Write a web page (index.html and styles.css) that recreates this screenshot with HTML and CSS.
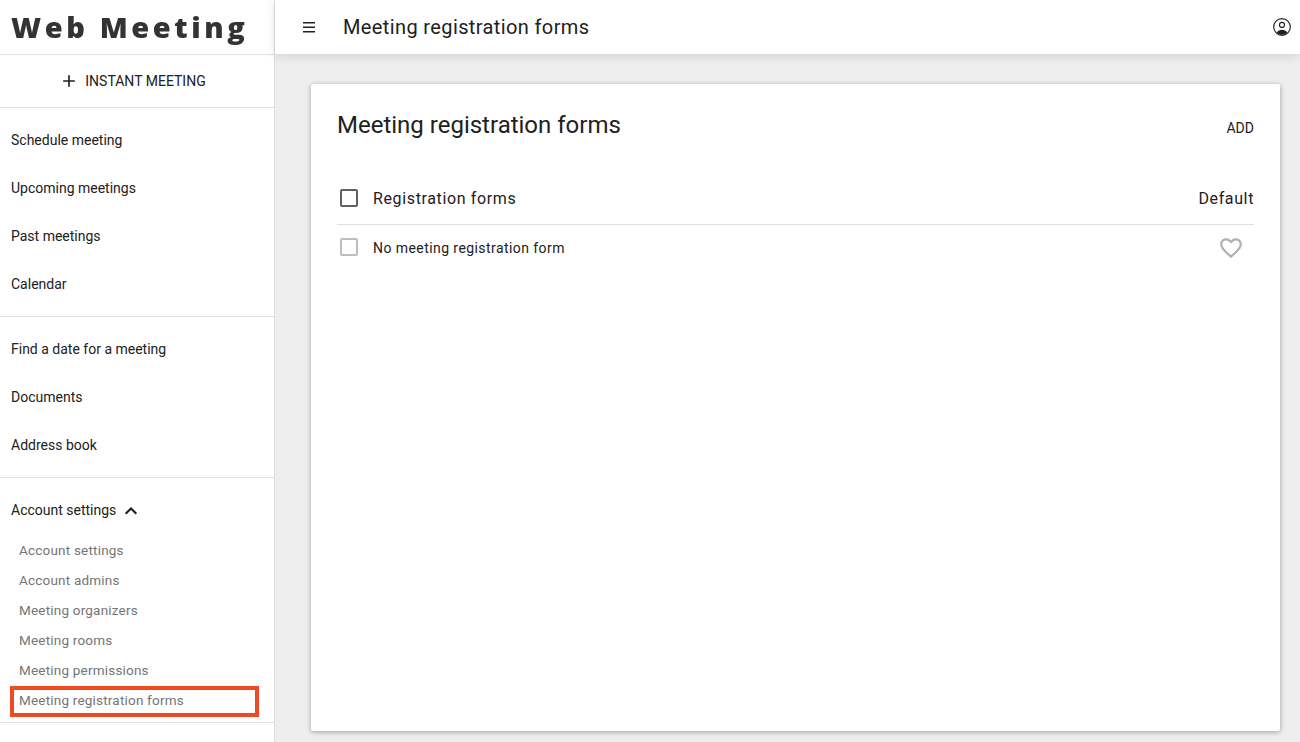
FILE: index.html
```html
<!DOCTYPE html>
<html lang="en">
<head>
<meta charset="utf-8">
<title>Meeting registration forms</title>
<link rel="stylesheet" href="styles.css">
</head>
<body>
<div class="app">
  <aside class="sidebar">
    <div class="logo"><span class="logo-text">Web Meeting</span></div>
    <button class="instant" type="button">
      <svg class="plus" viewBox="0 0 24 24" width="20" height="20"><path d="M19 13h-6v6h-2v-6H5v-2h6V5h2v6h6v2z"/></svg>
      <span>INSTANT MEETING</span>
    </button>
    <nav class="section">
      <a class="item">Schedule meeting</a>
      <a class="item">Upcoming meetings</a>
      <a class="item">Past meetings</a>
      <a class="item">Calendar</a>
    </nav>
    <nav class="section">
      <a class="item">Find a date for a meeting</a>
      <a class="item">Documents</a>
      <a class="item">Address book</a>
    </nav>
    <nav class="section">
      <a class="item">Account settings
        <svg class="chev" viewBox="0 0 24 24" width="22" height="22"><path d="M12 7.6l-6.6 6.6 1.6 1.6 5-5 5 5 1.6-1.6z"/></svg>
      </a>
      <a class="sub">Account settings</a>
      <a class="sub">Account admins</a>
      <a class="sub">Meeting organizers</a>
      <a class="sub">Meeting rooms</a>
      <a class="sub">Meeting permissions</a>
      <a class="sub sub-marked">Meeting registration forms</a>
    </nav>
  </aside>
  <div class="main">
    <header class="topbar">
      <svg class="menu" viewBox="0 0 12 11" width="12" height="11"><path d="M0 0h12v1.5H0zM0 4.4h12v1.5H0zM0 8.9h12v1.5H0z"/></svg>
      <h1 class="page-title">Meeting registration forms</h1>
      <svg class="user" viewBox="0 0 18 18" width="18" height="18"><circle class="user-line" cx="9" cy="9" r="8.3"/><circle class="user-line" cx="9" cy="6.9" r="2.5"/><path d="M3.7 14.4C5 12.6 7 11.8 9 11.8s4 .8 5.3 2.6C13 16 11.1 16.8 9 16.8s-4-.8-5.3-2.4z"/></svg>
    </header>
    <main class="content">
      <section class="card">
        <div class="card-head">
          <h2 class="card-title">Meeting registration forms</h2>
          <span class="add">ADD</span>
        </div>
        <div class="row row-head">
          <span class="check check-dark"></span>
          <span class="col-name">Registration forms</span>
          <span class="col-default">Default</span>
        </div>
        <div class="row row-body">
          <span class="check"></span>
          <span class="row-name">No meeting registration form</span>
          <svg class="heart" viewBox="0 0 24 24" width="26" height="26"><path d="M16.5 3c-1.74 0-3.41.81-4.5 2.09C10.91 3.81 9.24 3 7.5 3 4.42 3 2 5.42 2 8.5c0 3.78 3.4 6.86 8.55 11.54L12 21.35l1.45-1.32C18.6 15.36 22 12.28 22 8.5 22 5.42 19.58 3 16.5 3zm-4.4 15.55l-.1.1-.1-.1C7.14 14.24 4 11.39 4 8.5 4 6.5 5.5 5 7.5 5c1.54 0 3.04.99 3.57 2.36h1.87C13.46 5.99 14.96 5 16.5 5c2 0 3.5 1.5 3.5 3.5 0 2.89-3.14 5.74-7.9 10.05z"/></svg>
        </div>
      </section>
    </main>
  </div>
</div>
</body>
</html>
```
FILE: styles.css
```css
*, *::before, *::after { box-sizing: border-box; }
html, body { margin: 0; height: 100%; overflow: hidden; }
body {
  font-family: Roboto, "Liberation Sans", sans-serif;
  color: #212121;
  background: #eeeeee;
}
.app { display: flex; height: 742px; width: 1300px; }
.sidebar {
  width: 275px;
  flex: none;
  background: #fff;
  border-right: 1px solid #e0e0e0;
  display: flex;
  flex-direction: column;
}
.logo {
  height: 55px;
  flex: none;
  border-bottom: 1px solid #e0e0e0;
  padding: 0 0 2px 11px;
  display: flex;
  align-items: center;
}
.logo-text {
  font-family: "Open Sans", sans-serif;
  font-weight: 800;
  font-size: 29px;
  letter-spacing: 3.6px;
  color: #333;
  white-space: nowrap;
  filter: blur(0.35px);
}
.instant {
  height: 53px;
  flex: none;
  border: 0;
  border-bottom: 1px solid #e0e0e0;
  background: #fff;
  font: 400 14px Roboto, sans-serif;
  color: #212121;
  display: flex;
  align-items: center;
  justify-content: center;
  gap: 6px;
  padding: 0 9px 0 0;
}
.plus { fill: #212121; }
.section { padding: 8px 0; border-bottom: 1px solid #e0e0e0; flex: none; }
.item {
  height: 48px;
  padding-left: 11px;
  display: flex;
  align-items: center;
  gap: 4px;
  font-size: 14px;
  color: #212121;
}
.chev { fill: #212121; margin-top: 1px; }
.sub {
  display: flex;
  align-items: center;
  height: 30px;
  padding: 1px 0 0 19px;
  font-size: 13.5px;
  letter-spacing: 0.2px;
  color: #757575;
}
.sub-marked { position: relative; }
.sub-marked::after {
  content: "";
  position: absolute;
  left: 10px;
  top: 2px;
  width: 249px;
  height: 31px;
  border: 4px solid #f04a23;
}
.main { flex: 1; min-width: 0; display: flex; flex-direction: column; }
.topbar {
  height: 54px;
  flex: none;
  background: #fff;
  display: flex;
  align-items: center;
  padding: 0 9px 0 28px;
  box-shadow: 0 2px 10px rgba(0,0,0,0.12);
  position: relative;
}
.menu { fill: #212121; flex: none; margin-top: 1px; }
.page-title {
  margin: 0 0 0 28px;
  font-size: 20px;
  font-weight: 400;
  letter-spacing: 0.38px;
  flex: 1;
  color: #212121;
}
.user { fill: #212121; flex: none; }
.user-line { fill: none; stroke: #212121; stroke-width: 1.15; }
.content { flex: 1; padding: 30px 20px 11px 36px; min-height: 0; }
.card {
  height: 100%;
  background: #fff;
  border-radius: 2px;
  box-shadow: 0 1px 5px rgba(0,0,0,0.35);
  padding: 0 26px;
}
.card-head { display: flex; justify-content: space-between; align-items: center; height: 82px; }
.card-title { margin: 0; font-size: 24px; font-weight: 400; }
.add { font-size: 14px; position: relative; top: 3px; color: #212121; }
.row { display: flex; align-items: center; }
.row-head { height: 53px; margin-top: 6px; border-bottom: 1px solid #e0e0e0; font-size: 16px; letter-spacing: 0.63px; }
.row-body { height: 44px; font-size: 14px; letter-spacing: 0.43px; }
.check {
  width: 18px;
  height: 18px;
  margin: 0 15px 0 3px;
  flex: none;
  border: 2px solid #bdbdbd;
  border-radius: 2px;
}
.check-dark { border-color: #616161; }
.col-name { flex: 1; }
.row-name { flex: 1; padding-top: 1px; }
.heart { fill: #b0b0b0; margin: 2px 10px 0 0; }
```
